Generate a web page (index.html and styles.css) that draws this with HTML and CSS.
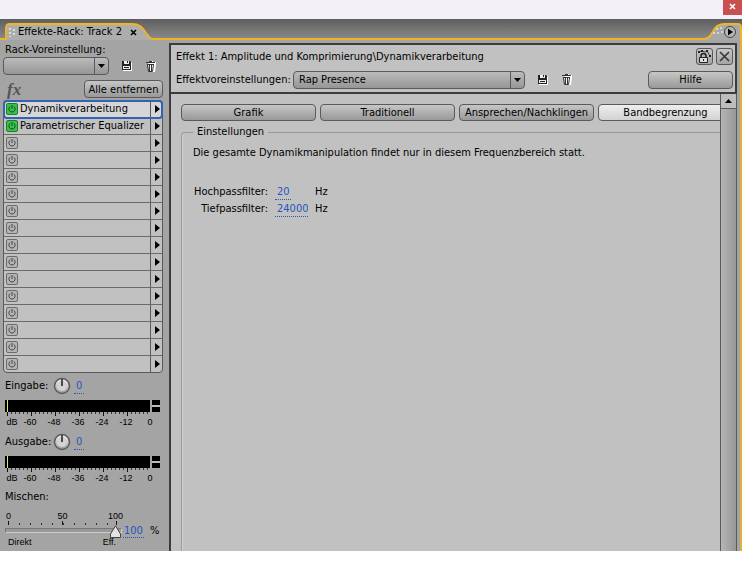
FILE: index.html
```html
<!DOCTYPE html>
<html lang="de">
<head>
    <meta charset="UTF-8">
    <meta name="viewport" content="width=device-width, initial-scale=1.0">
    <title>Effekte-Rack: Track 2</title>
    <link rel="stylesheet" href="styles.css">
</head>
<body>
    <!-- Shared icons -->
    <svg class="icon-defs" aria-hidden="true">
        <defs>
            <linearGradient id="knob-fill" x1="0" y1="0" x2="0" y2="1">
                <stop offset="0" stop-color="#f4f4f4"/>
                <stop offset="1" stop-color="#9a9a9a"/>
            </linearGradient>
        </defs>
        <symbol id="knob" viewBox="0 0 18 18">
            <circle cx="9" cy="9" r="7.5" fill="url(#knob-fill)" stroke="#5c5c5c" stroke-width="1.5"/>
            <circle cx="9" cy="9" r="5" fill="#d3d3d3"/>
            <path d="M9 2v7" stroke="#000" stroke-width="1.3"/>
        </symbol>
        <symbol id="icon-power" viewBox="0 0 10 10">
            <path d="M3.3 2.3a3.1 3.1 0 1 0 3.4 0M5 1v4" fill="none" stroke="currentColor"/>
        </symbol>
        <symbol id="icon-save" viewBox="0 0 12 12">
            <path d="M2 2h8l1 1v8H2z" fill="#fff"/>
            <path d="M1 1h8l1 1v8H1z" fill="#222"/>
            <path d="M3 1h5v3H3zM2 6h7v3H2z" fill="#eee"/>
            <path d="M6 1h1v2H6zM3 7h5v1H3z" fill="#222"/>
        </symbol>
        <symbol id="icon-trash" viewBox="0 0 12 13">
            <path d="M3 4h8l-1 8H4zM5 1h3v1h3v2H3z" fill="#fff"/>
            <path d="M1 2.5h9M4 1.5h3M2 4.5h7M2.5 5l1 6.5h4l1-6.5M4.5 5v6M6.5 5v6" fill="none" stroke="#333"/>
        </symbol>
    </svg>

    <!-- Window title bar -->
    <header class="titlebar">
        <button class="window-close" aria-label="Schließen">
            <svg width="7" height="7" viewBox="0 0 7 7"><path d="M1 1l5 5M6 1L1 6" stroke="#fff" stroke-width="1.6"/></svg>
        </button>
    </header>

    <div class="panel">
        <!-- Panel tab -->
        <div class="tab-strip">
            <div class="tab">
                <svg class="tab-shape" width="156" height="21" viewBox="0 0 156 21">
                    <path d="M0 20H6V9Q6 5 10 5H132C141 5 143 10 146 14Q150 20 153 20H156V21H0z" fill="#adadad"/>
                    <path d="M0 20H6V9Q6 5 10 5H132C141 5 143 10 146 14Q150 20 153 20H156" fill="none" stroke="#f0b522" stroke-width="2"/>
                    <path d="M9 9h2v2H9zM9 13h2v2H9zM9 17h2v1H9zM13 10h2v2h-2zM13 14h2v2h-2z" fill="#ddd"/>
                </svg>
                <span class="tab-title">Effekte-Rack: Track 2</span>
                <button class="tab-close" aria-label="Tab schließen">
                    <svg width="7" height="7" viewBox="0 0 7 7"><path d="M1 1l5 5M6 1L1 6" stroke="#000" stroke-width="1.6"/></svg>
                </button>
            </div>
            <button class="panel-menu" aria-label="Bedienfeldmenü">
                <svg width="38" height="21" viewBox="0 0 38 21">
                    <path d="M0 20Q5 20 8 14C11 9 13 5 20 5H34Q37 5 37 9V21H0z" fill="#a8a8a8"/>
                    <path d="M0 20Q5 20 8 14C11 9 13 5 20 5H34Q37 5 37 9V21" fill="none" stroke="#f0b522" stroke-width="2"/>
                    <path d="M12 9h2v2h-2zM16 8h2v2h-2zM9 13h2v2H9zM13 13h2v2h-2zM17 12h2v2h-2z" fill="#d5d5d5"/>
                    <circle cx="26" cy="13" r="5.5" fill="#b8b8b8" stroke="#444"/>
                    <path d="M24 9.5v7l5-3.5z" fill="#000"/>
                </svg>
            </button>
        </div>

        <div class="panel-body">
            <!-- Rack -->
            <aside class="rack">
                <label class="rack-label" for="rack-preset">Rack-Voreinstellung:</label>
                <div class="preset-row">
                    <select id="rack-preset" class="preset rack-preset"><option></option></select>
                    <button class="icon-button" aria-label="Speichern"><svg width="12" height="12"><use href="#icon-save"/></svg></button>
                    <button class="icon-button" aria-label="Löschen"><svg width="12" height="13"><use href="#icon-trash"/></svg></button>
                </div>
                <div class="fx-row">
                    <span class="fx">fx</span>
                    <button class="button">Alle entfernen</button>
                </div>

                <ul class="slots" id="slots"></ul>

                <div class="level">
                    <div class="level-row">
                        <label for="input-level">Eingabe:</label>
                        <svg class="knob" width="18" height="18"><use href="#knob"/></svg>
                        <input id="input-level" class="value" type="text" value="0">
                    </div>
                    <div class="meter"><span class="meter-bar"></span><span class="meter-peak"></span></div>
                    <div class="meter-ticks"></div>
                    <div class="meter-scale"><span>dB</span><span>-60</span><span>-48</span><span>-36</span><span>-24</span><span>-12</span><span>0</span></div>
                </div>

                <div class="level">
                    <div class="level-row">
                        <label for="output-level">Ausgabe:</label>
                        <svg class="knob" width="18" height="18"><use href="#knob"/></svg>
                        <input id="output-level" class="value" type="text" value="0">
                    </div>
                    <div class="meter"><span class="meter-bar"></span><span class="meter-peak"></span></div>
                    <div class="meter-ticks"></div>
                    <div class="meter-scale"><span>dB</span><span>-60</span><span>-48</span><span>-36</span><span>-24</span><span>-12</span><span>0</span></div>
                </div>

                <div class="mix">
                    <label for="mix">Mischen:</label>
                    <div class="mix-grid">
                        <div class="mix-scale"><span>0</span><span>50</span><span>100</span></div>
                        <div class="mix-ticks"></div>
                        <input id="mix" class="mix-slider" type="range" min="0" max="100" value="100">
                        <div class="mix-value">
                            <input class="value" type="text" value="100" aria-label="Mischen in Prozent">
                            <span>%</span>
                        </div>
                        <div class="mix-ends"><span>Direkt</span><span>Eff.</span></div>
                    </div>
                </div>
            </aside>

            <!-- Effect editor -->
            <main class="editor">
                <section class="effect-header">
                    <div class="effect-row">
                        <span>Effekt 1: Amplitude und Komprimierung\Dynamikverarbeitung</span>
                        <div class="effect-tools">
                            <button class="square-button" aria-label="Automation sperren">
                                <svg width="15" height="15" viewBox="0 0 15 15">
                                    <path d="M2 3l3-1 3 1 2-1 3 5" fill="none" stroke="#444"/>
                                    <path d="M1 2h2v2H1zM4 1h2v2H4zM9 1h2v2H9zM12 6h2v2h-2z" fill="#222"/>
                                    <path d="M4 8.5V7a2.5 2.5 0 0 1 5 0v1.5" fill="none" stroke="#222" stroke-width="1.5"/>
                                    <path d="M2.5 8.5h8v5h-8z" fill="#ddd" stroke="#222"/>
                                    <path d="M6 10h1v2H6z" fill="#222"/>
                                </svg>
                            </button>
                            <button class="square-button" aria-label="Effekt schließen">
                                <svg width="11" height="11" viewBox="0 0 11 11"><path d="M1 1l9 9M10 1l-9 9" stroke="#333" stroke-width="1.5"/></svg>
                            </button>
                        </div>
                    </div>
                    <div class="effect-row">
                        <label for="effect-preset">Effektvoreinstellungen:</label>
                        <select id="effect-preset" class="preset effect-preset"><option>Rap Presence</option></select>
                        <button class="icon-button" aria-label="Speichern"><svg width="12" height="12"><use href="#icon-save"/></svg></button>
                        <button class="icon-button" aria-label="Löschen"><svg width="12" height="13"><use href="#icon-trash"/></svg></button>
                        <button class="button help">Hilfe</button>
                    </div>
                </section>

                <section class="effect-body">
                    <div class="effect-content">
                        <nav class="views">
                            <button class="button view">Grafik</button>
                            <button class="button view">Traditionell</button>
                            <button class="button view">Ansprechen/Nachklingen</button>
                            <button class="button view active">Bandbegrenzung</button>
                        </nav>
                        <fieldset class="settings">
                            <legend>Einstellungen</legend>
                            <p>Die gesamte Dynamikmanipulation findet nur in diesem Frequenzbereich statt.</p>
                            <div class="filters">
                                <label for="highpass">Hochpassfilter:</label>
                                <input id="highpass" class="value value-short" type="text" value="20">
                                <span>Hz</span>
                                <label for="lowpass">Tiefpassfilter:</label>
                                <input id="lowpass" class="value" type="text" value="24000">
                                <span>Hz</span>
                            </div>
                        </fieldset>
                    </div>
                    <div class="scrollbar">
                        <button class="scroll-up" aria-label="Nach oben"><svg width="7" height="4" viewBox="0 0 7 4"><path d="M0 4l3.5-4L7 4z"/></svg></button>
                    </div>
                </section>
            </main>
        </div>
    </div>

    <script>
        const effects = ["Dynamikverarbeitung", "Parametrischer Equalizer"];
        const slotCount = 16;
        const slots = document.getElementById('slots');

        for (let i = 0; i < slotCount; i++) {
            const name = effects[i] || '';
            const slot = document.createElement('li');
            slot.className = 'slot' + (name ? ' on' : '') + (i === 0 ? ' selected' : '');
            slot.innerHTML = `
                <button class="power" aria-label="Ein/Aus"><svg width="10" height="10"><use href="#icon-power"/></svg></button>
                <span class="slot-name">${name}</span>
                <button class="slot-menu" aria-label="Effekt wählen"><svg width="5" height="8" viewBox="0 0 5 8"><path d="M0 0l5 4-5 4z"/></svg></button>`;
            slots.appendChild(slot);
        }
    </script>
</body>
</html>
```

FILE: styles.css
```css
* {
    box-sizing: border-box;
}
body {
    margin: 0;
    background-color: #fff;
    color: #000;
    font-family: "DejaVu Sans Condensed", "DejaVu Sans", sans-serif;
    font-size: 11px;
    line-height: 16px;
}
button, input, select {
    margin: 0;
    padding: 0;
    border: none;
    color: inherit;
    font: inherit;
}
button {
    background: none;
    cursor: pointer;
}
svg {
    display: block;
}
.icon-defs {
    position: absolute;
    width: 0;
    height: 0;
}

/* Title bar */
.titlebar {
    display: flex;
    justify-content: flex-end;
    align-items: flex-start;
    height: 19px;
    background-color: #f3f0f8;
}
.window-close {
    display: flex;
    align-items: center;
    justify-content: center;
    width: 19px;
    height: 15px;
    padding-bottom: 3px;
    background-color: #c75050;
}

/* Tab strip */
.tab-strip {
    display: flex;
    justify-content: space-between;
    height: 21px;
    background: linear-gradient(#f0b522, #f0b522) bottom / 100% 2px no-repeat, linear-gradient(#5e5e5e, #8c8c8c);
}
.tab {
    position: relative;
    display: flex;
    align-items: center;
    gap: 8px;
    width: 156px;
    padding: 5px 0 0 18px;
}
.tab-shape {
    position: absolute;
    left: 0;
    top: 0;
}
.tab-title, .tab-close {
    position: relative;
}
.panel-body {
    display: flex;
    border-right: 2px solid #e0b13a;
    background-color: #a4a4a4;
}

/* Shared controls */
.button {
    height: 18px;
    border: 1px solid #5a5a5a;
    border-radius: 4px;
    background: linear-gradient(#c6c6c6, #999);
    line-height: 15px;
    text-align: center;
    white-space: nowrap;
}
.preset {
    appearance: none;
    height: 18px;
    padding-left: 5px;
    border: 1px solid #5a5a5a;
    border-radius: 4px;
    background:
        url("data:image/svg+xml,%3Csvg xmlns='http://www.w3.org/2000/svg' width='14' height='16'%3E%3Cpath d='M0 0h1v16H0z' fill='%235a5a5a'/%3E%3Cpath d='M4 6h7l-3.5 4z'/%3E%3C/svg%3E") right center no-repeat,
        linear-gradient(#bbb, #969696);
}
.icon-button {
    width: 12px;
}
.value {
    width: 33px;
    height: 15px;
    padding-left: 2px;
    border-bottom: 1px dotted #2858b8;
    background: none;
    color: #2456be;
    line-height: 14px;
}
.value-short {
    width: 16px;
}

/* Rack */
.rack {
    flex: none;
    width: 169px;
    padding: 2px 6px 0 3px;
}
.rack-label {
    display: block;
    height: 15px;
    padding-left: 2px;
}
.preset-row {
    display: flex;
    align-items: center;
    justify-content: space-between;
    padding-right: 6px;
}
.rack-preset {
    width: 106px;
}
.fx-row {
    display: flex;
    justify-content: space-between;
    height: 25px;
    padding-top: 5px;
}
.fx-row .button {
    width: 79px;
}
.fx {
    padding-left: 4px;
    color: #555;
    font-family: "Liberation Serif", serif;
    font-size: 17px;
    font-style: italic;
    font-weight: bold;
    line-height: 20px;
}
.slots {
    margin: 0;
    padding: 0;
    border: 1px solid #5a5a5a;
    border-radius: 4px;
    background-color: #c1c1c1;
    list-style: none;
}
.slot {
    display: flex;
    align-items: center;
    height: 17px;
    border-bottom: 1px solid #6b6b6b;
}
.slot:last-child {
    height: 16px;
    border-bottom: none;
}
.power {
    width: 12px;
    height: 12px;
    margin-left: 2px;
    border: 1px solid #6b6b6b;
    border-radius: 2px;
    background-color: #b5b5b5;
    color: #444;
}
.on .power {
    border-color: #23792f;
    background-color: #37c24c;
    color: #0b4f18;
}
.selected {
    outline: 2px solid #3364b4;
    outline-offset: -1px;
    border-radius: 3px;
    background-color: #d6d6d6;
}
.slot-name {
    flex: 1;
    padding-left: 2px;
    white-space: nowrap;
}
.slot-menu {
    width: 12px;
    height: 16px;
    padding-left: 4px;
    border-left: 1px solid #5a5a5a;
}

/* Levels */
.level {
    height: 56px;
    padding: 4px 0 0 2px;
}
.level-row {
    display: flex;
    align-items: center;
    height: 18px;
}
.level-row label {
    width: 48px;
}
.level-row .value {
    width: 10px;
    margin-left: 3px;
}
.meter {
    display: flex;
    gap: 2px;
    height: 12px;
    margin-top: 5px;
}
.meter-bar {
    width: 145px;
    background: linear-gradient(90deg, #000 2px, #e6e65a 2px, #e6e65a 3px, #000 3px);
}
.meter-peak {
    width: 8px;
    background: linear-gradient(#000 5px, #bbb 5px, #bbb 7px, #000 7px);
}
.meter-ticks {
    width: 143px;
    height: 4px;
    margin-left: 2px;
    background:
        repeating-linear-gradient(90deg, #111 0 1px, transparent 1px 24px) 0 0 / 100% 4px no-repeat,
        repeating-linear-gradient(90deg, #333 0 1px, transparent 1px 4px) 0 0 / 100% 2px no-repeat;
}
.meter-scale {
    display: grid;
    grid-template-columns: 12px repeat(6, 24px);
    padding-left: 1px;
    font-family: "Liberation Sans", sans-serif;
    font-size: 9px;
    line-height: 13px;
    text-align: center;
}

/* Mix */
.mix {
    padding: 4px 0 0 2px;
}
.mix label {
    display: block;
}
.mix-grid {
    display: grid;
    grid-template-columns: 118px 1fr;
    padding-top: 7px;
    font-family: "Liberation Sans", sans-serif;
    font-size: 9px;
    line-height: 9px;
}
.mix-scale {
    display: grid;
    grid-template-columns: 40px 33px 1fr;
    grid-column: 1;
    padding-left: 1px;
}
.mix-scale span:nth-child(2) {
    text-align: center;
}
.mix-scale span:nth-child(3) {
    text-align: right;
}
.mix-ticks {
    grid-column: 1;
    width: 109px;
    height: 4px;
    margin-left: 3px;
    background:
        repeating-linear-gradient(90deg, #111 0 1px, transparent 1px 54px) 0 0 / 100% 4px no-repeat,
        repeating-linear-gradient(90deg, #333 0 1px, transparent 1px 11px) 0 2px / 100% 2px no-repeat;
}
.mix-slider {
    appearance: none;
    grid-column: 1;
    grid-row: 3;
    width: 117px;
    height: 11px;
    background: none;
}
.mix-slider::-webkit-slider-runnable-track {
    height: 5px;
    border: 1px solid #777;
    border-right-color: #ccc;
    border-bottom-color: #ccc;
    background-color: #999;
}
.mix-slider::-webkit-slider-thumb {
    appearance: none;
    width: 11px;
    height: 13px;
    margin-top: -4px;
    background: url("data:image/svg+xml,%3Csvg xmlns='http://www.w3.org/2000/svg' width='11' height='13'%3E%3Cpath d='M5.5 .8L.5 9v3.5h10V9z' fill='%23e4e4e4' stroke='%23444'/%3E%3C/svg%3E");
}
.mix-value {
    display: flex;
    align-items: center;
    gap: 6px;
    grid-column: 2;
    grid-row: 3;
    height: 11px;
    font-family: "DejaVu Sans Condensed", "DejaVu Sans", sans-serif;
    font-size: 11px;
}
.mix-value .value {
    width: 21px;
    padding: 0 0 0 1px;
}
.mix-ends {
    display: flex;
    justify-content: space-between;
    grid-column: 1;
    padding: 2px 7px 4px 3px;
}

/* Effect editor */
.editor {
    display: flex;
    flex: 1;
    flex-direction: column;
    min-width: 0;
    margin: 3px 3px 0 0;
    border-left: 2px solid #3c3c3c;
    background-color: #c1c1c1;
}
.effect-header {
    display: flex;
    flex-direction: column;
    gap: 6px;
    height: 51px;
    padding: 3px 2px 3px 5px;
    border: solid #3c3c3c;
    border-width: 2px 2px 2px 0;
}
.effect-row {
    display: flex;
    align-items: center;
    height: 17px;
}
.effect-tools {
    display: flex;
    gap: 3px;
    margin-left: auto;
}
.square-button {
    display: flex;
    align-items: center;
    justify-content: center;
    width: 17px;
    height: 17px;
    border: 1px solid #5a5a5a;
    border-radius: 3px;
    background: linear-gradient(#c6c6c6, #a5a5a5);
}
.effect-row label {
    width: 117px;
    white-space: nowrap;
}
.effect-preset {
    width: 232px;
    margin-right: 12px;
}
.effect-row .icon-button + .icon-button {
    margin-left: 12px;
}
.help {
    width: 85px;
    margin-left: auto;
}
.effect-body {
    display: flex;
    flex: 1;
}
.effect-content {
    display: flex;
    flex: 1;
    flex-direction: column;
    min-width: 0;
    padding: 10px 0 0 10px;
    overflow: hidden;
}
.views {
    display: flex;
    gap: 4px;
}
.view {
    flex: none;
    width: 135px;
    height: 17px;
}
.view.active {
    background: linear-gradient(#eee, #d2d2d2);
}
.settings {
    flex: 1;
    margin: 3px -12px 0 0;
    padding: 5px 11px;
    border: solid #999;
    border-width: 1px 0 0 1px;
    border-radius: 4px 0 0 0;
    box-shadow: inset 1px 0 #d2d2d2;
}
.settings legend {
    padding: 0 4px;
}
.settings p {
    margin: 0;
}
.filters {
    display: grid;
    grid-template-columns: 75px 33px auto;
    column-gap: 7px;
    row-gap: 1px;
    justify-content: start;
    align-items: center;
    padding-top: 23px;
}
.filters label {
    text-align: right;
}
.scrollbar {
    width: 17px;
    border: solid #5a5a5a;
    border-width: 0 1px;
    background: linear-gradient(90deg, #b5b5b5, #979797);
}
.scroll-up {
    display: flex;
    align-items: center;
    justify-content: center;
    width: 100%;
    height: 15px;
    border-bottom: 1px solid #5a5a5a;
    background-color: #bdbdbd;
}
```
